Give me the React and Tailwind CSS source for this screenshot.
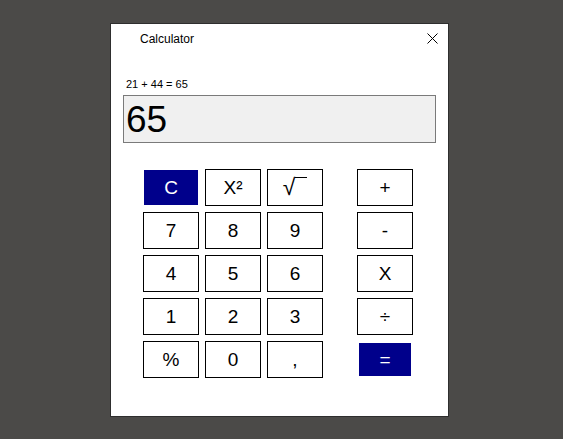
import React from 'react'

const rows = [
  [{ label: 'C', kind: 'blue1' }, { label: 'X²' }, { label: 'sqrt' }, { label: '+' }],
  [{ label: '7' }, { label: '8' }, { label: '9' }, { label: '-' }],
  [{ label: '4' }, { label: '5' }, { label: '6' }, { label: 'X' }],
  [{ label: '1' }, { label: '2' }, { label: '3' }, { label: '÷' }],
  [{ label: '%' }, { label: '0' }, { label: ',' }, { label: '=', kind: 'blue2' }],
]

function CalcButton({ label, kind }) {
  let cls = 'border border-black bg-white text-black'
  if (kind === 'blue1') cls = 'border border-white bg-[#00008b] text-white'
  if (kind === 'blue2') cls = 'border-2 border-white bg-[#00008b] text-white'
  return (
    <button className={`flex h-[37px] w-[56px] items-center justify-center text-[19px] leading-none ${cls}`}>
      {label === 'sqrt' ? (
        <span className="flex items-start">
          <span className="text-[23px] leading-none">√</span>
          <span className="mt-[1px] block w-[12px] border-t border-black" />
        </span>
      ) : (
        label
      )}
    </button>
  )
}

export default function App() {
  return (
    <div className="h-[439px] w-[563px] bg-[#4b4a48] pl-[110px] pt-[23px] font-['Liberation_Sans',Arial,sans-serif]">
      <div className="flex h-[394px] w-[339px] flex-col border border-[#2e2e2e] bg-white">
        {/* title bar */}
        <div className="flex h-[30px] items-center justify-between pl-[29px] pr-[10px]">
          <span className="text-[12px] text-black">Calculator</span>
          <svg width="11" height="11" viewBox="0 0 11 11" className="mb-[1px]">
            <path d="M0.5 0.5L10.5 10.5M10.5 0.5L0.5 10.5" stroke="#000" strokeWidth="1" />
          </svg>
        </div>

        <div className="px-[12px]">
          <div className="mt-[24px] pl-[3px] text-[11px] leading-[13px] text-black">21 + 44 = 65</div>
          <div className="mt-[4px] flex h-[48px] items-center border border-[#7a7a7a] bg-[#f0f0f0] pl-[2px] text-[37px] leading-none text-black">
            65
          </div>
        </div>

        {/* keypad */}
        <div className="mt-[26px] flex flex-col gap-[6px] pl-[32px]">
          {rows.map((row, i) => (
            <div key={i} className="flex">
              <div className="flex gap-[6px]">
                {row.slice(0, 3).map((b) => (
                  <CalcButton key={b.label} {...b} />
                ))}
              </div>
              <div className="ml-[34px]">
                <CalcButton {...row[3]} />
              </div>
            </div>
          ))}
        </div>
      </div>
    </div>
  )
}
